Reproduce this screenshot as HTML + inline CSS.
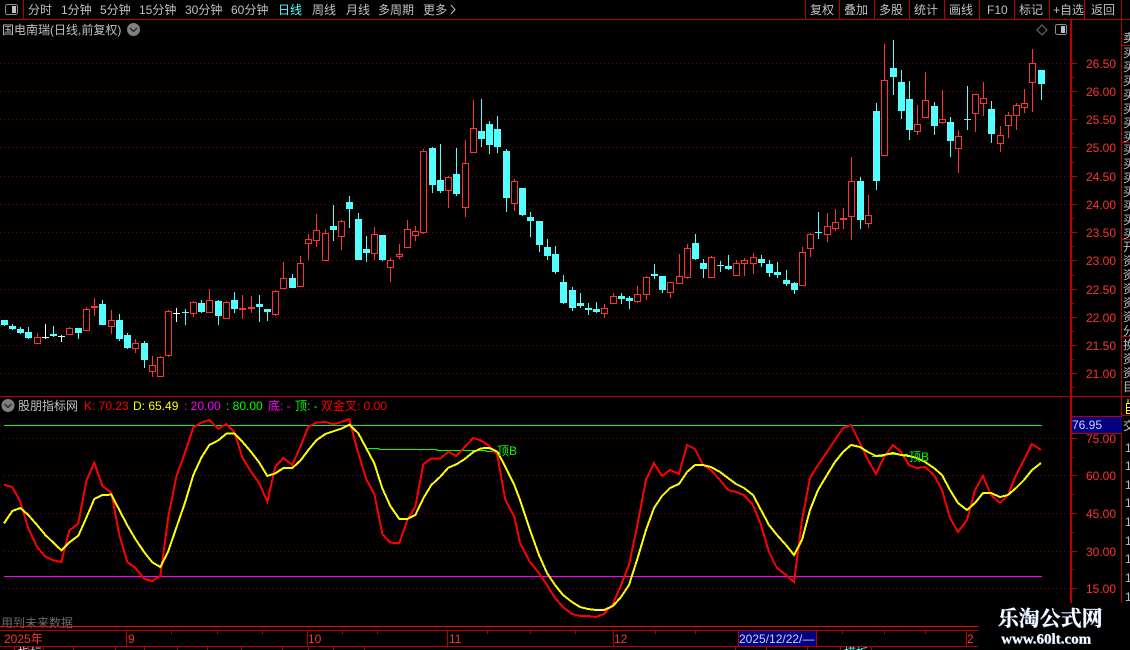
<!DOCTYPE html>
<html><head><meta charset="utf-8"><title>K线</title>
<style>
html,body{margin:0;padding:0;background:#000;width:1130px;height:650px;overflow:hidden}
svg{display:block}
text{font-family:"Liberation Sans","WenQuanYi Zen Hei","Noto Sans CJK SC",sans-serif;font-size:12px;white-space:pre}
.c{fill:#c0c0c0}.r{fill:#ff3232}
</style></head><body>
<svg width="1130" height="650" viewBox="0 0 1130 650" xmlns="http://www.w3.org/2000/svg">
<rect width="1130" height="650" fill="#000"/>
<!-- grid -->
<g stroke="#7c0000" stroke-dasharray="1 3" shape-rendering="crispEdges">
<path d="M0 63.5H1070M0 91.5H1070M0 119.5H1070M0 147.5H1070M0 176.5H1070M0 204.5H1070M0 232.5H1070M0 260.5H1070M0 289.5H1070M0 317.5H1070M0 345.5H1070M0 373.5H1070"/>
<path d="M4 438.5H1070M4 475.5H1070M4 513.5H1070M4 551.5H1070M4 588.5H1070"/>
</g>
<!-- frame lines -->
<g stroke="#b80000" fill="none" shape-rendering="crispEdges">
<path d="M0 19.5H1130M0 396.5H1122M1122 396.5H1130"/>
<path d="M23.5 0V19M805.5 0V19M839.5 0V19M874.5 0V19M909.5 0V19M944.5 0V19M979.5 0V19M1014.5 0V19M1049.5 0V19M1084.5 0V19"/>
<path d="M1121.5 0V603M1122 45.5H1130M1122 142.5H1130M1122 239.5H1130M1122 336.5H1130M1122 415.5H1130"/>
<path d="M1070.5 20V603M1071.5 20V603"/>
<path d="M1072 63.5h5M1072 91.5h5M1072 119.5h5M1072 147.5h5M1072 176.5h5M1072 204.5h5M1072 232.5h5M1072 260.5h5M1072 289.5h5M1072 317.5h5M1072 345.5h5M1072 373.5h5M1072 77.5h2M1072 105.5h2M1072 133.5h2M1072 162.5h2M1072 190.5h2M1072 218.5h2M1072 246.5h2M1072 275.5h2M1072 303.5h2M1072 331.5h2M1072 359.5h2M1072 387.5h2"/>
<path d="M1072 438.5h5M1072 475.5h5M1072 513.5h5M1072 551.5h5M1072 588.5h5M1072 457.5h2M1072 494.5h2M1072 532.5h2M1072 569.5h2"/>
<path d="M0 630.5H978M0 646.5H978"/>
<path d="M126.5 631V646M307.5 631V646M447.5 631V646M613.5 631V646M738.5 631V646M816.5 631V646M966.5 631V646"/>
<path d="M171.5 631v3M217.5 631v3M262.5 631v3M342.5 631v3M377.5 631v3M487.5 631v3M530.5 631v3M575.5 631v3M655.5 631v3M695.5 631v3M842.5 631v3M884.5 631v3M925.5 631v3"/>
<path d="M14.5 647v3M43.5 647v3M73.5 647v3M115.5 647v3M144.5 647v3M177.5 647v3M207.5 647v3M241.5 647v3M282.5 647v3M308.5 647v3M333.5 647v3M364.5 647v3M735.5 647v3M766.5 647v3M807.5 647v3M840.5 647v3M871.5 647v3"/>
</g>
<path d="M0 626.5H978" stroke="#f00" shape-rendering="crispEdges"/>
<!-- red wicks -->
<path stroke="#ff3232" fill="none" shape-rendering="crispEdges" d="M37.5 333V343M69.5 327V334M86.5 307V331M94.5 298V316M111.5 310V334M135.5 339V353M152.5 356V377M160.5 356V376M168.5 310V357M193.5 301V317M209.5 289V312M226.5 301V318M242.5 295V319M251.5 296V313M275.5 290V316M283.5 262V288M300.5 256V286M308.5 234V260M316.5 214V247M325.5 229V261M341.5 220V250M374.5 227V260M390.5 258V282M399.5 244V259M407.5 220V247M415.5 226V241M423.5 149V234M448.5 176V208M465.5 140V217M473.5 100V152M514.5 179V211M604.5 304V318M613.5 293V303M637.5 286V303M646.5 276V300M670.5 282V298M679.5 254V283M687.5 244V279M711.5 256V278M736.5 260V275M744.5 258V276M753.5 253V274M802.5 247V285M810.5 233V257M827.5 213V242M835.5 209V231M843.5 208V229M851.5 157V240M868.5 195V228M884.5 44V155M917.5 105V135M925.5 72V117M942.5 90V124M958.5 130V173M975.5 94V132M983.5 82V116M1000.5 126V152M1008.5 112V138M1016.5 103V130M1024.5 89V113M1032.5 49V112"/>
<!-- red bodies -->
<g fill="#000" stroke="#ff3232" shape-rendering="crispEdges">
<rect x="34.5" y="337.5" width="6" height="6"/><rect x="66.5" y="328.5" width="6" height="6"/><rect x="83.5" y="309.5" width="6" height="21"/><rect x="108.5" y="320.5" width="6" height="6"/><rect x="132.5" y="343.5" width="6" height="5"/><rect x="149.5" y="365.5" width="6" height="6"/><rect x="157.5" y="357.5" width="6" height="19"/><rect x="165.5" y="311.5" width="6" height="44"/><rect x="190.5" y="302.5" width="6" height="11"/><rect x="206.5" y="300.5" width="6" height="12"/><rect x="223.5" y="302.5" width="6" height="16"/><rect x="272.5" y="291.5" width="6" height="23"/><rect x="280.5" y="278.5" width="6" height="10"/><rect x="297.5" y="263.5" width="6" height="23"/><rect x="305.5" y="239.5" width="6" height="4"/><rect x="313.5" y="230.5" width="6" height="10"/><rect x="322.5" y="233.5" width="6" height="27"/><rect x="338.5" y="221.5" width="6" height="15"/><rect x="371.5" y="234.5" width="6" height="19"/><rect x="387.5" y="260.5" width="6" height="7"/><rect x="396.5" y="254.5" width="6" height="2"/><rect x="404.5" y="229.5" width="6" height="18"/><rect x="412.5" y="231.5" width="6" height="4"/><rect x="420.5" y="151.5" width="6" height="81"/><rect x="445.5" y="177.5" width="6" height="13"/><rect x="462.5" y="163.5" width="6" height="44"/><rect x="470.5" y="128.5" width="6" height="24"/><rect x="511.5" y="181.5" width="6" height="22"/><rect x="601.5" y="308.5" width="6" height="5"/><rect x="610.5" y="296.5" width="6" height="7"/><rect x="634.5" y="294.5" width="6" height="7"/><rect x="643.5" y="277.5" width="6" height="17"/><rect x="667.5" y="282.5" width="6" height="10"/><rect x="676.5" y="276.5" width="6" height="7"/><rect x="684.5" y="248.5" width="6" height="29"/><rect x="708.5" y="257.5" width="6" height="20"/><rect x="733.5" y="263.5" width="6" height="12"/><rect x="741.5" y="260.5" width="6" height="3"/><rect x="750.5" y="257.5" width="6" height="6"/><rect x="799.5" y="252.5" width="6" height="33"/><rect x="807.5" y="234.5" width="6" height="14"/><rect x="824.5" y="226.5" width="6" height="8"/><rect x="832.5" y="222.5" width="6" height="6"/><rect x="848.5" y="181.5" width="6" height="35"/><rect x="865.5" y="215.5" width="6" height="8"/><rect x="881.5" y="80.5" width="6" height="75"/><rect x="914.5" y="124.5" width="6" height="7"/><rect x="922.5" y="100.5" width="6" height="17"/><rect x="939.5" y="119.5" width="6" height="3"/><rect x="955.5" y="136.5" width="6" height="12"/><rect x="972.5" y="94.5" width="6" height="19"/><rect x="980.5" y="98.5" width="6" height="5"/><rect x="997.5" y="135.5" width="6" height="8"/><rect x="1005.5" y="115.5" width="6" height="10"/><rect x="1013.5" y="105.5" width="6" height="10"/><rect x="1021.5" y="103.5" width="6" height="4"/><rect x="1029.5" y="63.5" width="6" height="19"/>
</g>
<!-- red flats -->
<path fill="#ff3232" shape-rendering="crispEdges" d="M91 306h7v2h-7zM239 308h7v2h-7zM248 307h7v2h-7zM840 218h7v2h-7z"/>
<!-- cyan wicks -->
<path stroke="#54ffff" fill="none" shape-rendering="crispEdges" d="M4.5 320V326M12.5 324V330M20.5 327V334M28.5 327V339M53.5 326V337M78.5 328V339M102.5 300V325M119.5 314V341M127.5 333V349M144.5 341V368M185.5 309V325M201.5 300V313M218.5 300V325M234.5 292V313M259.5 295V322M267.5 309V321M292.5 274V288M333.5 205V241M349.5 196V228M358.5 213V260M366.5 236V262M382.5 235V261M432.5 147V193M440.5 144V193M456.5 148V196M481.5 99V147M489.5 121V154M497.5 116V153M506.5 149V212M522.5 188V216M530.5 212V237M539.5 221V252M547.5 239V260M555.5 246V274M563.5 275V304M572.5 287V311M580.5 293V308M588.5 303V315M596.5 302V313M621.5 293V304M629.5 296V309M654.5 264V279M662.5 276V293M695.5 234V260M703.5 259V278M720.5 261V272M728.5 255V270M761.5 255V267M769.5 260V277M777.5 262V278M786.5 270V286M794.5 282V294M818.5 212V239M860.5 177V229M876.5 103V190M893.5 40V95M901.5 70V119M909.5 81V140M934.5 102V135M950.5 117V157M967.5 86V130M991.5 101V143M1041.5 70V100"/>
<!-- cyan bodies -->
<path fill="#54ffff" shape-rendering="crispEdges" d="M1 320h7V325h-7zM9 326h7V329h-7zM17 329h7V333h-7zM25 332h7V338h-7zM50 334h7V336h-7zM75 328h7V333h-7zM99 304h7V325h-7zM116 320h7V339h-7zM124 335h7V348h-7zM141 343h7V360h-7zM182 312h7V313h-7zM198 303h7V312h-7zM215 301h7V316h-7zM231 300h7V309h-7zM256 304h7V307h-7zM264 309h7V312h-7zM289 278h7V288h-7zM330 226h7V230h-7zM346 202h7V209h-7zM355 219h7V260h-7zM363 249h7V253h-7zM379 235h7V260h-7zM429 148h7V185h-7zM437 180h7V191h-7zM453 174h7V194h-7zM478 131h7V139h-7zM486 124h7V145h-7zM494 129h7V147h-7zM503 151h7V198h-7zM519 188h7V215h-7zM527 217h7V221h-7zM536 221h7V245h-7zM544 247h7V256h-7zM552 254h7V272h-7zM560 282h7V303h-7zM569 290h7V308h-7zM577 303h7V306h-7zM585 308h7V310h-7zM593 309h7V312h-7zM618 296h7V299h-7zM626 298h7V301h-7zM651 274h7V276h-7zM659 276h7V290h-7zM692 243h7V259h-7zM700 263h7V269h-7zM717 265h7V266h-7zM725 266h7V269h-7zM758 259h7V263h-7zM766 264h7V273h-7zM774 272h7V275h-7zM783 280h7V284h-7zM791 283h7V290h-7zM815 232h7V233h-7zM857 181h7V220h-7zM873 111h7V181h-7zM890 68h7V77h-7zM898 82h7V111h-7zM906 99h7V130h-7zM931 106h7V126h-7zM947 122h7V141h-7zM964 119h7V120h-7zM988 109h7V134h-7zM1038 70h7V84h-7z"/>
<!-- white crosses -->
<path stroke="#fff" fill="none" shape-rendering="crispEdges" d="M45.5 324V339M42 337.5h7M61.5 335V342M58 336.5h7M176.5 308V322M173 313.5h7"/>
<!-- indicator -->
<path d="M4 425.5H1042" stroke="#0f0" shape-rendering="crispEdges"/>
<path d="M4 576.5H1042" stroke="#f0f" shape-rendering="crispEdges"/>
<path d="M366 448.5H379V449.5H437V450.5H486V451.5H497M872 456.5H885V454.5H908" stroke="#0f0" fill="none" shape-rendering="crispEdges"/>
<g fill="none" stroke-width="2" shape-rendering="crispEdges">
<g stroke="#f00">
<polyline stroke-width="6" transform="translate(0 420) scale(.33333)" points="12,194 37,201 61,245 85,325 112,382 136,410 160,421 184,426 208,332 235,310 259,183 283,128 307,198 334,218 358,345 382,426 406,443 433,477 457,483 481,468 505,290 529,170 556,95 580,22 604,8 628,0 655,26 679,12 703,36 727,112 751,152 778,190 802,245 826,140 850,114 877,135 901,80 925,20 949,8 976,6 1000,13 1024,6 1048,-3 1072,90 1099,178 1123,222 1147,342 1171,368 1198,369 1222,300 1246,260 1270,133 1294,115 1321,116 1345,95 1369,108 1393,82 1420,54 1444,62 1468,78 1492,105 1516,240 1543,290 1560,368"/>
<polyline points="520,543 530,562 539,573 547,585 555,598 563,607 572,614 580,616 588,616 596,617 604,614 613,604 621,585 629,565 637,527 646,480 654,463 662,476 670,470 679,474 687,445 695,449 703,465 711,470 720,480 728,490 736,492 744,495 753,505 761,525 769,552 777,568 786,575 794,582 802,520 810,478 818,465 827,452 835,440 843,428 851,425 860,443 868,460 876,474 884,457 893,445 901,452 909,465 917,468 925,467 934,475 942,490 950,518 958,532 967,520 975,490 983,476 991,495 1000,503 1008,495 1016,475 1024,460 1032,444 1041,450"/>
</g>
<g stroke="#ff0">
<polyline stroke-width="6" transform="translate(0 420) scale(.33333)" points="12,310 37,273 61,264 85,285 112,316 136,345 160,368 184,391 208,367 235,347 259,293 283,237 307,225 334,224 358,270 382,316 406,357 433,397 457,427 481,441 505,393 529,323 556,245 580,165 604,113 628,75 655,61 679,41 703,41 727,65 751,93 778,128 802,168 826,160 850,144 877,144 901,122 925,90 949,61 976,42 1000,34 1024,26 1048,14 1075,40 1099,85 1123,130 1147,205 1171,258 1198,297 1222,297 1246,285 1270,235 1294,195 1321,170 1345,143 1369,133 1393,118 1420,96 1444,85 1468,84 1492,95 1516,140 1543,195 1560,240"/>
<polyline points="520,500 530,530 539,555 547,573 555,585 563,595 572,602 580,607 588,609 596,610 604,610 613,606 621,597 629,585 637,560 646,530 654,508 662,496 670,488 679,484 687,472 695,465 703,465 711,467 720,472 728,478 736,484 744,488 753,495 761,510 769,525 777,535 786,545 794,555 802,540 810,510 818,490 827,475 835,462 843,452 851,445 860,447 868,452 876,456 884,455 893,453 901,455 909,456 917,458 925,462 934,468 942,475 950,490 958,503 967,510 975,503 983,493 991,493 1000,497 1008,495 1016,488 1024,480 1032,470 1041,463"/>
</g>
</g>
<text x="497" y="455" fill="#0f0">顶B</text>
<text x="909" y="461" fill="#0f0">顶B</text>
<!-- top toolbar -->
<rect x="5.5" y="4.5" width="12" height="10" rx="2" fill="none" stroke="#909090"/><rect x="12" y="6" width="4" height="7" fill="#c0c0c0"/>
<g class="c">
<text x="28" y="14">分时</text><text x="61" y="14">1分钟</text><text x="100" y="14">5分钟</text><text x="139" y="14">15分钟</text><text x="185" y="14">30分钟</text><text x="231" y="14">60分钟</text>
<text x="312" y="14">周线</text><text x="346" y="14">月线</text><text x="378" y="14">多周期</text><text x="423" y="14">更多</text>
<text x="810" y="14">复权</text><text x="844" y="14">叠加</text><text x="879" y="14">多股</text><text x="914" y="14">统计</text><text x="949" y="14">画线</text><text x="987" y="14">F10</text><text x="1019" y="14">标记</text><text x="1053" y="14">+自选</text><text x="1091" y="14">返回</text>
<text x="2" y="34">国电南瑞(日线,前复权)</text>
<text x="18" y="410">股朋指标网</text>
</g>
<text x="278" y="14" fill="#54ffff">日线</text>
<path d="M451 5l4 4.5-4 4.5" fill="none" stroke="#c0c0c0"/>
<circle cx="133.5" cy="29.5" r="6.5" fill="#808080"/><path d="M130 28l3.5 3.5 3.5-3.5" fill="none" stroke="#222" stroke-width="1.3"/>
<path d="M1042 25l5 5-5 5-5-5z" fill="none" stroke="#707070"/>
<rect x="1055.5" y="24.5" width="11" height="10" rx="2" fill="none" stroke="#909090"/><rect x="1061" y="26" width="4" height="7" fill="#c0c0c0"/>
<!-- indicator header -->
<circle cx="8" cy="405.5" r="6.5" fill="#808080"/><path d="M4.5 404l3.5 3.5 3.5-3.5" fill="none" stroke="#222" stroke-width="1.3"/>
<text x="84" y="410" fill="#f00">K: 70.23</text>
<text x="133" y="410" fill="#ff0">D: 65.49</text>
<text x="184" y="410" fill="#f0f">: 20.00</text>
<text x="226" y="410" fill="#0f0">: 80.00</text>
<text x="268" y="410" fill="#f0f">底: -</text>
<text x="295" y="410" fill="#0f0">顶: -</text>
<text x="321" y="410" fill="#f00">双金叉: 0.00</text>
<!-- price labels -->
<g class="r">
<text x="1086" y="68">26.50</text><text x="1086" y="96">26.00</text><text x="1086" y="124">25.50</text><text x="1086" y="152">25.00</text><text x="1086" y="181">24.50</text><text x="1086" y="209">24.00</text><text x="1086" y="237">23.50</text><text x="1086" y="265">23.00</text><text x="1086" y="294">22.50</text><text x="1086" y="322">22.00</text><text x="1086" y="350">21.50</text><text x="1086" y="378">21.00</text>
<text x="1086" y="443">75.00</text><text x="1086" y="480">60.00</text><text x="1086" y="518">45.00</text><text x="1086" y="556">30.00</text><text x="1086" y="593">15.00</text>
</g>
<rect x="1072" y="417" width="50" height="16" fill="#000080"/>
<path d="M1072 416.5H1122M1072 433.5H1122" stroke="#b80000" shape-rendering="crispEdges"/>
<text x="1072" y="429" fill="#c8d0ff">76.95</text>
<!-- right clipped strip -->
<g class="c" font-size="12">
<text x="1123" y="42">卖</text>
<text x="1123" y="57">买</text><text x="1123" y="71">买</text><text x="1123" y="85">买</text><text x="1123" y="99">买</text><text x="1123" y="113">买</text><text x="1123" y="127">买</text><text x="1123" y="141">买</text>
<text x="1123" y="154">买</text><text x="1123" y="168">买</text><text x="1123" y="182">买</text><text x="1123" y="196">买</text><text x="1123" y="210">买</text><text x="1123" y="224">买</text><text x="1123" y="238">买</text>
<text x="1123" y="251">开</text><text x="1123" y="265">资</text><text x="1123" y="279">资</text><text x="1123" y="293">资</text><text x="1123" y="307">资</text><text x="1123" y="321">资</text><text x="1123" y="335">分</text>
<text x="1123" y="349">换</text><text x="1123" y="363">资</text><text x="1123" y="377">资</text><text x="1123" y="391">目</text>
<text x="1123" y="430">交</text>
<text x="1125" y="452">1</text><text x="1125" y="470">1</text><text x="1125" y="489">1</text><text x="1125" y="507">1</text><text x="1125" y="526">1</text><text x="1125" y="545">1</text><text x="1125" y="563">1</text><text x="1125" y="582">1</text><text x="1125" y="601">1</text>
</g>
<path d="M1126.5 403.5H1130M1126.5 403.5V413.5H1130M1127 407.5H1130M1127 410.5H1130M1128 399V403" fill="none" stroke="#ff0" shape-rendering="crispEdges"/>
<!-- bottom -->
<text x="1" y="627" fill="#6a6a6a">用到未来数据</text>
<path d="M0 626.5H72" stroke="#f00" shape-rendering="crispEdges"/>
<g class="r">
<text x="4" y="643">2025年</text><text x="128" y="643">9</text><text x="308" y="643">10</text><text x="449" y="643">11</text><text x="614" y="643">12</text><text x="967" y="643">2</text>
</g>
<rect x="739" y="631" width="77" height="15" fill="#000080"/>
<text x="739" y="643" fill="#c8d0ff">2025/12/22/—</text>
<text x="18" y="657" fill="#e0e0e0">指标</text><text x="48" y="657" fill="#e0e0e0">·</text>
<text x="844" y="657" fill="#54ffff">模板</text>
<!-- watermark -->
<rect x="978" y="603" width="152" height="47" fill="#000"/>
<text x="998" y="626" fill="#87b6ff" style="font-family:'Liberation Serif','Noto Serif CJK SC',serif;font-size:21px;font-weight:700">乐淘公式网</text>
<text x="997.5" y="625.5" fill="#fff" style="font-family:'Liberation Serif','Noto Serif CJK SC',serif;font-size:21px;font-weight:700">乐淘公式网</text>
<text x="1001.5" y="644" fill="#87b6ff" style="font-family:'Liberation Serif',serif;font-size:15px;font-weight:700">www.60lt.com</text>
<text x="1001" y="643.5" fill="#fff" style="font-family:'Liberation Serif',serif;font-size:15px;font-weight:700">www.60lt.com</text>
</svg>
</body></html>
